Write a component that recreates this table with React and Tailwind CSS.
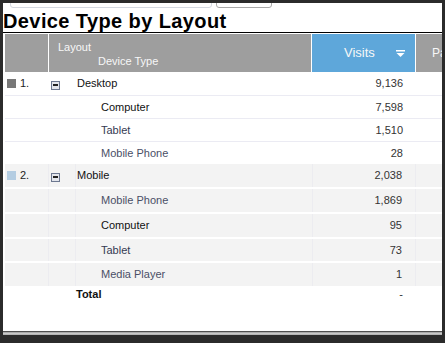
import React from 'react';

const desktopRows = [
    { label: 'Computer', visits: '7,598', h: 'h-[23px]', tone: 'text-[#111]', border: true },
    { label: 'Tablet', visits: '1,510', h: 'h-[23px]', tone: 'text-[#343a52]', border: true },
    { label: 'Mobile Phone', visits: '28', h: 'h-[22px]', tone: 'text-[#4a4f66]', border: false },
];

const mobileRows = [
    { label: 'Mobile Phone', visits: '1,869', h: 'h-[25px]', tone: 'text-[#4a4f66]', border: true },
    { label: 'Computer', visits: '95', h: 'h-[25px]', tone: 'text-[#111]', border: true },
    { label: 'Tablet', visits: '73', h: 'h-[24px]', tone: 'text-[#343a52]', border: true },
    { label: 'Media Player', visits: '1', h: 'h-[23px]', tone: 'text-[#4a4f66]', border: false },
];

const CollapseIcon = () => (
    <span className="mt-[3px] flex h-[9px] w-[9px] items-center justify-center border border-[#6d7890] bg-[#e4e6ec]">
        <span className="h-[1.5px] w-[5px] bg-[#222]" />
    </span>
);

const SortIcon = () => (
    <svg width="9" height="7" viewBox="0 0 9 7" className="mt-[1px]">
        <rect x="0" y="0" width="9" height="1.5" fill="#fff" />
        <path d="M0.5 3 L8.5 3 L4.5 7 Z" fill="#fff" />
    </svg>
);

// one grid row; "shaded" rows belong to the second layout group
const Row = ({ h, shaded, border, bullet, icon, label, labelClass, visits }) => (
    <div
        className={`flex ${h} ${shaded ? 'bg-[#f3f3f3]' : 'bg-white'} ${
            border ? (shaded ? 'border-b-2 border-white' : 'border-b border-[#ebebf3]') : ''
        }`}
    >
        <div className={`flex w-[44px] shrink-0 items-center pl-[2px] ${shaded ? 'border-r border-[#ececf0]' : ''}`}>
            {bullet}
        </div>
        <div className={`flex w-[27px] shrink-0 justify-start pl-[2px] items-center ${shaded ? 'border-r border-[#ececf0]' : ''}`}>
            {icon}
        </div>
        <div className={`flex w-[236px] shrink-0 items-center ${labelClass}`}>{label}</div>
        <div className={`flex w-[104px] shrink-0 items-center justify-end pr-[13px] text-[#333] ${shaded ? 'border-x border-[#ececf0]' : ''}`}>
            {visits}
        </div>
        <div className="flex-1" />
    </div>
);

const Bullet = ({ color, n }) => (
    <div className="flex items-center gap-[4px]">
        <span className={`h-[9px] w-[9px] ${color}`} />
        <span className="text-[#222]">{n}</span>
    </div>
);

export default function App() {
    return (
        <div className="h-[343px] w-[445px] overflow-hidden bg-[#2b2b2b] pl-[3px] pr-[3px] pt-[3px] font-['Liberation_Sans',Arial,sans-serif] text-[11px]">
            <div className="flex h-[329px] flex-col bg-white">
                {/* filter inputs, scrolled mostly out of view */}
                <div className="flex h-[5px] items-end gap-[4px] overflow-hidden pl-[7px]">
                    <div className="h-[20px] w-[202px] shrink-0 rounded-[3px] border border-[#d4d8e0]" />
                    <div className="h-[20px] w-[56px] shrink-0 rounded-[3px] border border-[#a8a8a8]" />
                </div>

                <h1 className="flex h-[25px] items-center border-b border-black pt-[1px] text-[20px] font-bold leading-none tracking-[0.4px] text-black">
                    Device Type by Layout
                </h1>

                <div className="ml-[2px] mt-[1px] flex-1">
                    {/* header */}
                    <div className="flex h-[38px] text-[#f7f7f7]">
                        <div className="w-[44px] shrink-0 border-r border-white bg-[#9e9e9e]" />
                        <div className="w-[263px] shrink-0 border-r border-white bg-[#9e9e9e] pl-[9px] pt-[6px] leading-[14px]">
                            <div>Layout</div>
                            <div className="pl-[40px]">Device Type</div>
                        </div>
                        <div className="flex w-[104px] shrink-0 items-center border-r border-white bg-[#5ea7da] pl-[32px] pr-[10px] text-[13px]">
                            <span className="flex-1">Visits</span>
                            <SortIcon />
                        </div>
                        <div className="flex flex-1 items-center overflow-hidden whitespace-nowrap bg-[#9e9e9e] pl-[16px] text-[12px]">Pa</div>
                    </div>

                    {/* desktop group */}
                    <Row
                        h="h-[24px]"
                        border
                        bullet={<Bullet color="bg-[#787878]" n="1." />}
                        icon={<CollapseIcon />}
                        label="Desktop"
                        labelClass="pl-[1px] text-[#111]"
                        visits="9,136"
                    />
                    {desktopRows.map((r) => (
                        <Row
                            key={r.label}
                            h={r.h}
                            border={r.border}
                            label={r.label}
                            labelClass={`pl-[25px] ${r.tone}`}
                            visits={r.visits}
                        />
                    ))}

                    {/* mobile group */}
                    <Row
                        h="h-[25px]"
                        shaded
                        border
                        bullet={<Bullet color="bg-[#b4cde2]" n="2." />}
                        icon={<CollapseIcon />}
                        label="Mobile"
                        labelClass="pl-[1px] text-[#111]"
                        visits="2,038"
                    />
                    {mobileRows.map((r) => (
                        <Row
                            key={r.label}
                            h={r.h}
                            shaded
                            border={r.border}
                            label={r.label}
                            labelClass={`pl-[25px] ${r.tone}`}
                            visits={r.visits}
                        />
                    ))}

                    {/* total */}
                    <div className="flex h-[16px] items-center pt-[1px]">
                        <div className="w-[71px] shrink-0" />
                        <div className="w-[236px] shrink-0 font-bold text-[#111]">Total</div>
                        <div className="w-[104px] shrink-0 pr-[13px] text-right text-[#333]">-</div>
                    </div>
                </div>

                {/* bottom edge */}
                <div className="h-[1px] bg-[#4f4f4f]" />
            </div>
            <div className="h-[1px] bg-[#a9a9a9]" />
            <div className="h-[1px] bg-[#c9c9c9]" />
            <div className="h-[1px] bg-[#b5b5b5]" />
        </div>
    );
}
